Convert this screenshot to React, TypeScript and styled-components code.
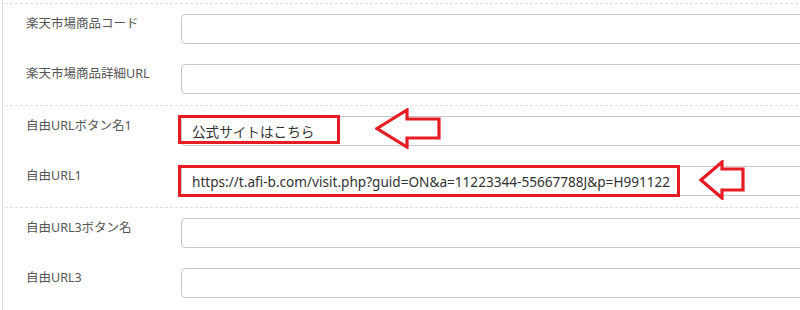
import React from 'react'
import styled, { createGlobalStyle } from 'styled-components'

const GlobalStyle = createGlobalStyle`
  html, body {
    margin: 0;
    padding: 0;
    background: #fff;
    overflow: hidden;
  }
  body {
    font-family: 'Noto Sans', 'Noto Sans CJK JP', sans-serif;
  }
`

type Field = {
  label: string
  value?: string
  mark?: { width: number; height: number }
  arrow?: 'large' | 'small'
}

const sections: Field[][] = [
  [{ label: '楽天市場商品コード' }, { label: '楽天市場商品詳細URL' }],
  [
    {
      label: '自由URLボタン名1',
      value: '公式サイトはこちら',
      mark: { width: 162, height: 29 },
      arrow: 'large',
    },
    {
      label: '自由URL1',
      value: 'https://t.afi-b.com/visit.php?guid=ON&a=11223344-55667788J&p=H991122',
      mark: { width: 502, height: 32 },
      arrow: 'small',
    },
  ],
  [{ label: '自由URL3ボタン名' }, { label: '自由URL3' }],
]

const LeftArrow: React.FC<{ size: 'large' | 'small' }> = ({ size }) => {
  const large = size === 'large'
  const w = large ? 66 : 46
  const h = large ? 41 : 40
  const points = large
    ? '2,20.5 32,2 32,11 64,11 64,30 32,30 32,39'
    : '2,20 23,2 23,9 44,9 44,30 23,30 23,38'
  return (
    <ArrowSvg
      $large={large}
      width={w}
      height={h}
      viewBox={`0 0 ${w} ${h}`}
    >
      <polygon
        points={points}
        fill="#fff"
        stroke="#e51c23"
        strokeWidth={3.2}
        strokeLinejoin="miter"
      />
    </ArrowSvg>
  )
}

const App: React.FC = () => {
  return (
    <>
      <GlobalStyle />
      <Page>
        {sections.map((fields, i) => (
          <Section key={i}>
            {fields.map((f) => (
              <Row key={f.label}>
                <Label>{f.label}</Label>
                <InputWrap>
                  <TextInput readOnly defaultValue={f.value ?? ''} />
                  {f.mark && (
                    <Mark style={{ width: f.mark.width, height: f.mark.height }} />
                  )}
                  {f.arrow && <LeftArrow size={f.arrow} />}
                </InputWrap>
              </Row>
            ))}
          </Section>
        ))}
      </Page>
    </>
  )
}

const Page = styled.div`
  width: 840px;
  margin-left: 2px;
  padding-top: 3px;
  border-left: 1px solid #dcdcdc;
  min-height: 310px;
`

const Section = styled.div`
  display: flex;
  flex-direction: column;
  gap: 20px;
  margin-left: 2px;
  padding: 10px 0 11px;
  border-top: 1px dashed #dedede;
`

const Row = styled.div`
  display: flex;
  align-items: flex-start;
`

const Label = styled.div`
  width: 176px;
  flex-shrink: 0;
  padding-left: 21px;
  box-sizing: border-box;
  font-size: 12.5px;
  line-height: 20px;
  color: #555;
  white-space: nowrap;
`

const InputWrap = styled.div`
  position: relative;
  flex: 1;
  height: 30px;
`

const TextInput = styled.input`
  box-sizing: border-box;
  width: 100%;
  height: 30px;
  margin: 0;
  padding: 0 10px;
  border: 1px solid #c8c8c8;
  border-radius: 4px;
  background: #fff;
  font-family: 'Noto Sans', 'Noto Sans CJK JP', sans-serif;
  font-size: 13.6px;
  color: #333;
  outline: none;
`

const Mark = styled.div`
  position: absolute;
  left: -3px;
  top: -1px;
  box-sizing: border-box;
  border: 3.5px solid #e51c23;
  pointer-events: none;
`

const ArrowSvg = styled.svg<{ $large: boolean }>`
  position: absolute;
  left: ${(p) => (p.$large ? '194px' : '518px')};
  top: ${(p) => (p.$large ? '-8px' : '-6px')};
  display: block;
`

export default App
